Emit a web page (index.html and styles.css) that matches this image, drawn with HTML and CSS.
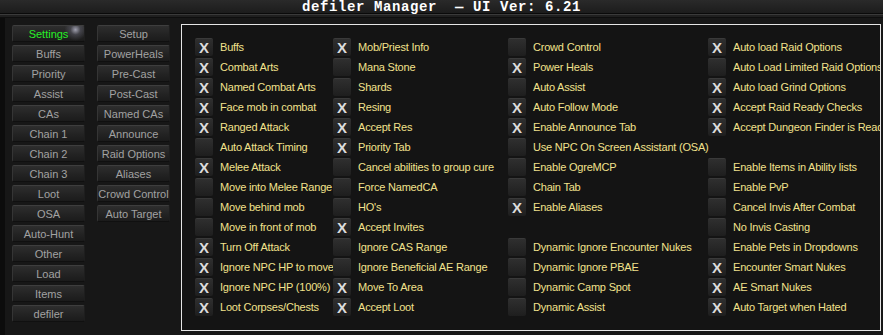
FILE: index.html
```html
<!DOCTYPE html>
<html>
<head>
<meta charset="utf-8">
<link rel="stylesheet" href="styles.css">
</head>
<body>
<div class="window">
  <div class="titlebar">defiler Manager  — UI Ver: 6.21</div>
  <div class="sep"></div>
  <div class="main">
    <div class="nav">
      <div class="navcol">
        <div class="btn active">Settings</div>
        <div class="btn">Buffs</div>
        <div class="btn">Priority</div>
        <div class="btn">Assist</div>
        <div class="btn">CAs</div>
        <div class="btn">Chain 1</div>
        <div class="btn">Chain 2</div>
        <div class="btn">Chain 3</div>
        <div class="btn">Loot</div>
        <div class="btn">OSA</div>
        <div class="btn">Auto-Hunt</div>
        <div class="btn">Other</div>
        <div class="btn">Load</div>
        <div class="btn">Items</div>
        <div class="btn">defiler</div>
      </div>
      <div class="navcol">
        <div class="btn">Setup</div>
        <div class="btn">PowerHeals</div>
        <div class="btn">Pre-Cast</div>
        <div class="btn">Post-Cast</div>
        <div class="btn">Named CAs</div>
        <div class="btn">Announce</div>
        <div class="btn">Raid Options</div>
        <div class="btn">Aliases</div>
        <div class="btn">Crowd Control</div>
        <div class="btn">Auto Target</div>
      </div>
    </div>
    <div class="options">
      <div class="grid">
        <!-- column 1 -->
        <div class="opt"><span class="cb">X</span><span class="lbl">Buffs</span></div>
        <div class="opt"><span class="cb">X</span><span class="lbl">Combat Arts</span></div>
        <div class="opt"><span class="cb">X</span><span class="lbl">Named Combat Arts</span></div>
        <div class="opt"><span class="cb">X</span><span class="lbl">Face mob in combat</span></div>
        <div class="opt"><span class="cb">X</span><span class="lbl">Ranged Attack</span></div>
        <div class="opt"><span class="cb"></span><span class="lbl">Auto Attack Timing</span></div>
        <div class="opt"><span class="cb">X</span><span class="lbl">Melee Attack</span></div>
        <div class="opt"><span class="cb"></span><span class="lbl">Move into Melee Range</span></div>
        <div class="opt"><span class="cb"></span><span class="lbl">Move behind mob</span></div>
        <div class="opt"><span class="cb"></span><span class="lbl">Move in front of mob</span></div>
        <div class="opt"><span class="cb">X</span><span class="lbl">Turn Off Attack</span></div>
        <div class="opt"><span class="cb">X</span><span class="lbl">Ignore NPC HP to move</span></div>
        <div class="opt"><span class="cb">X</span><span class="lbl">Ignore NPC HP (100%)</span></div>
        <div class="opt"><span class="cb">X</span><span class="lbl">Loot Corpses/Chests</span></div>
        <!-- column 2 -->
        <div class="opt"><span class="cb">X</span><span class="lbl">Mob/Priest Info</span></div>
        <div class="opt"><span class="cb"></span><span class="lbl">Mana Stone</span></div>
        <div class="opt"><span class="cb"></span><span class="lbl">Shards</span></div>
        <div class="opt"><span class="cb">X</span><span class="lbl">Resing</span></div>
        <div class="opt"><span class="cb">X</span><span class="lbl">Accept Res</span></div>
        <div class="opt"><span class="cb">X</span><span class="lbl">Priority Tab</span></div>
        <div class="opt"><span class="cb"></span><span class="lbl">Cancel abilities to group cure</span></div>
        <div class="opt"><span class="cb"></span><span class="lbl">Force NamedCA</span></div>
        <div class="opt"><span class="cb"></span><span class="lbl">HO's</span></div>
        <div class="opt"><span class="cb">X</span><span class="lbl">Accept Invites</span></div>
        <div class="opt"><span class="cb"></span><span class="lbl">Ignore CAS Range</span></div>
        <div class="opt"><span class="cb"></span><span class="lbl">Ignore Beneficial AE Range</span></div>
        <div class="opt"><span class="cb">X</span><span class="lbl">Move To Area</span></div>
        <div class="opt"><span class="cb">X</span><span class="lbl">Accept Loot</span></div>
        <!-- column 3 -->
        <div class="opt"><span class="cb"></span><span class="lbl">Crowd Control</span></div>
        <div class="opt"><span class="cb">X</span><span class="lbl">Power Heals</span></div>
        <div class="opt"><span class="cb"></span><span class="lbl">Auto Assist</span></div>
        <div class="opt"><span class="cb">X</span><span class="lbl">Auto Follow Mode</span></div>
        <div class="opt"><span class="cb">X</span><span class="lbl">Enable Announce Tab</span></div>
        <div class="opt"><span class="cb"></span><span class="lbl">Use NPC On Screen Assistant (OSA)</span></div>
        <div class="opt"><span class="cb"></span><span class="lbl">Enable OgreMCP</span></div>
        <div class="opt"><span class="cb"></span><span class="lbl">Chain Tab</span></div>
        <div class="opt"><span class="cb">X</span><span class="lbl">Enable Aliases</span></div>
        <div class="opt blank"></div>
        <div class="opt"><span class="cb"></span><span class="lbl">Dynamic Ignore Encounter Nukes</span></div>
        <div class="opt"><span class="cb"></span><span class="lbl">Dynamic Ignore PBAE</span></div>
        <div class="opt"><span class="cb"></span><span class="lbl">Dynamic Camp Spot</span></div>
        <div class="opt"><span class="cb"></span><span class="lbl">Dynamic Assist</span></div>
        <!-- column 4 -->
        <div class="opt"><span class="cb">X</span><span class="lbl">Auto load Raid Options</span></div>
        <div class="opt"><span class="cb"></span><span class="lbl">Auto Load Limited Raid Options</span></div>
        <div class="opt"><span class="cb">X</span><span class="lbl">Auto load Grind Options</span></div>
        <div class="opt"><span class="cb">X</span><span class="lbl">Accept Raid Ready Checks</span></div>
        <div class="opt"><span class="cb">X</span><span class="lbl">Accept Dungeon Finder is Ready</span></div>
        <div class="opt blank"></div>
        <div class="opt"><span class="cb"></span><span class="lbl">Enable Items in Ability lists</span></div>
        <div class="opt"><span class="cb"></span><span class="lbl">Enable PvP</span></div>
        <div class="opt"><span class="cb"></span><span class="lbl">Cancel Invis After Combat</span></div>
        <div class="opt"><span class="cb"></span><span class="lbl">No Invis Casting</span></div>
        <div class="opt"><span class="cb"></span><span class="lbl">Enable Pets in Dropdowns</span></div>
        <div class="opt"><span class="cb">X</span><span class="lbl">Encounter Smart Nukes</span></div>
        <div class="opt"><span class="cb">X</span><span class="lbl">AE Smart Nukes</span></div>
        <div class="opt"><span class="cb">X</span><span class="lbl">Auto Target when Hated</span></div>
      </div>
    </div>
  </div>
</div>
</body>
</html>
```

FILE: styles.css
```css
* { box-sizing: border-box; }
html, body {
  margin: 0;
  padding: 0;
  background: #121212;
}
.window {
  width: 883px;
  height: 335px;
  overflow: hidden;
  background: #161616;
  font-family: "Liberation Sans", Arial, sans-serif;
}
.titlebar {
  height: 13px;
  line-height: 14px;
  text-align: center;
  white-space: pre;
  color: #ffffff;
  font-family: "Liberation Mono", "Courier New", monospace;
  font-weight: bold;
  font-size: 14px;
  letter-spacing: 0.6px;
  background: linear-gradient(#2a2a2a, #1c1c1c);
}
.sep {
  height: 5px;
  background: linear-gradient(#0a0a0a 0, #0a0a0a 1px, #3a3a3a 1px, #3a3a3a 2px, #1f1f1f 2px, #1f1f1f 4px, #0e0e0e 4px);
}
.main {
  display: flex;
  align-items: flex-start;
  height: 317px;
  padding: 6px 0 0 12px;
  background: linear-gradient(90deg, #0c0c0c 0, #0c0c0c 5px, #171717 5px);
}
.nav {
  display: flex;
  gap: 12px;
  padding-top: 1px;
}
.navcol {
  display: flex;
  flex-direction: column;
  gap: 3px;
  width: 73px;
}
.btn {
  height: 17px;
  line-height: 16px;
  text-align: center;
  font-size: 11px;
  color: #a2a2a2;
  white-space: nowrap;
  border-radius: 2px;
  border-top: 1px solid #3e3e3e;
  border-left: 1px solid #353535;
  border-right: 1px solid #1e1e1e;
  border-bottom: 1px solid #101010;
  background: linear-gradient(#2e2e2e, #242424 50%, #1b1b1b);
}
.btn.active {
  color: #27f027;
  background: radial-gradient(circle at 88% 25%, rgba(200,200,220,0.75) 0, rgba(120,120,140,0.35) 5px, rgba(0,0,0,0) 11px), linear-gradient(#2e2e2e, #242424 50%, #1b1b1b);
}
.options {
  margin-left: 11px;
  width: 700px;
  height: 307px;
  border: 1px solid #e6e6e6;
  overflow: hidden;
  background: #141414;
  padding: 13px 0 0 13px;
}
.grid {
  display: grid;
  grid-auto-flow: column;
  grid-template-rows: repeat(14, 18px);
  grid-template-columns: 138px 175px 200px 200px;
  row-gap: 2px;
}
.opt {
  display: flex;
  align-items: center;
  gap: 6px;
  height: 18px;
  white-space: nowrap;
}
.cb {
  flex: none;
  width: 18px;
  height: 18px;
  line-height: 18px;
  text-align: center;
  border-radius: 2px;
  border-top: 1px solid #3a3a3a;
  background: linear-gradient(#2f2f2f, #252525 60%, #1e1e1e);
  color: #dcdcdc;
  font-size: 15px;
  font-weight: bold;
}
.lbl {
  font-size: 11px;
  letter-spacing: -0.2px;
  color: #f2e28c;
  padding-left: 1px;
}
```
